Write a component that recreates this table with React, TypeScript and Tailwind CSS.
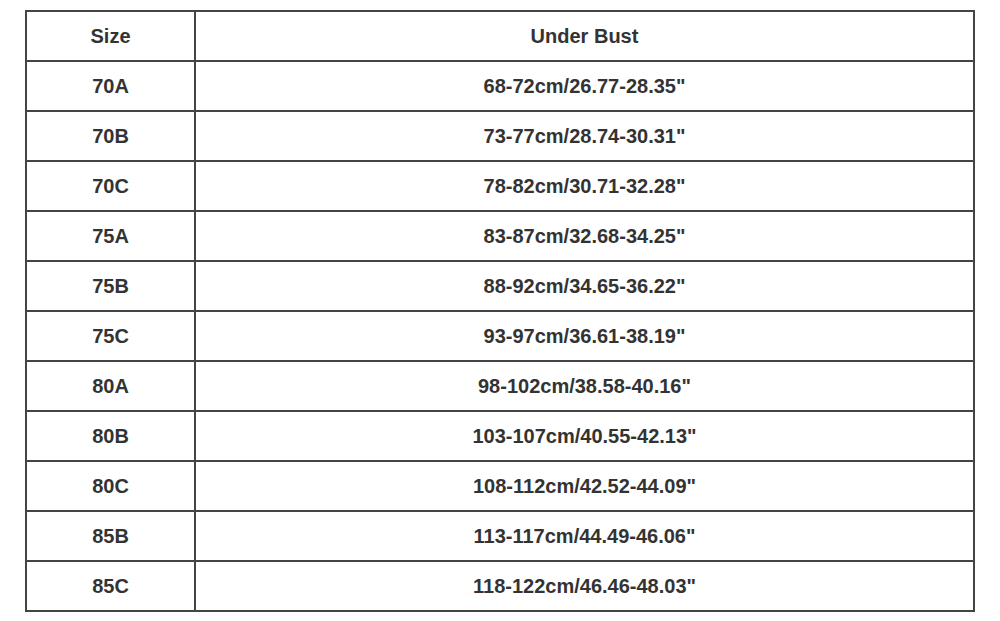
const rows = [
  ["70A", '68-72cm/26.77-28.35"'],
  ["70B", '73-77cm/28.74-30.31"'],
  ["70C", '78-82cm/30.71-32.28"'],
  ["75A", '83-87cm/32.68-34.25"'],
  ["75B", '88-92cm/34.65-36.22"'],
  ["75C", '93-97cm/36.61-38.19"'],
  ["80A", '98-102cm/38.58-40.16"'],
  ["80B", '103-107cm/40.55-42.13"'],
  ["80C", '108-112cm/42.52-44.09"'],
  ["85B", '113-117cm/44.49-46.06"'],
  ["85C", '118-122cm/46.46-48.03"'],
];

const App = () => {
  return (
    <div className="bg-white w-[1000px] h-[621px] pt-[10px] pl-[25px] font-['Liberation_Sans',Arial,sans-serif] text-[#333] font-bold text-[20px]">
      <table className="border-collapse w-[950px] table-fixed">
        <colgroup>
          <col className="w-[169px]" />
          <col />
        </colgroup>
        <thead>
          <tr>
            <th className="border-2 border-[#444] h-[50px] p-0 text-center font-bold">Size</th>
            <th className="border-2 border-[#444] h-[50px] p-0 text-center font-bold">Under Bust</th>
          </tr>
        </thead>
        <tbody>
          {rows.map(([size, bust]) => (
            <tr key={size}>
              <td className="border-2 border-[#444] h-[50px] p-0 text-center">{size}</td>
              <td className="border-2 border-[#444] h-[50px] p-0 text-center">{bust}</td>
            </tr>
          ))}
        </tbody>
      </table>
    </div>
  );
};

export default App;
